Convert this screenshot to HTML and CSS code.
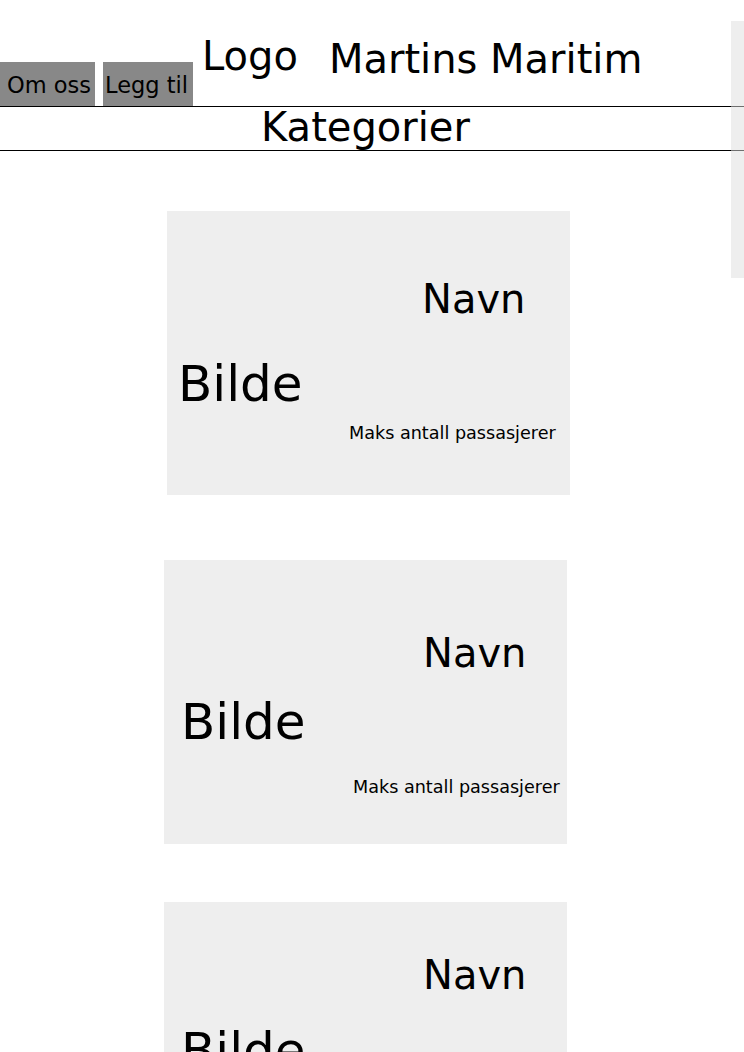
FILE: index.html
```html
<!DOCTYPE html>
<html lang="no">
<head>
<meta charset="utf-8">
<title>Martins Maritim</title>
<link rel="stylesheet" href="styles.css">
</head>
<body>
<header class="site-header">
  <nav class="nav">
    <a class="nav-btn nav-btn--about" href="#">Om oss</a>
    <a class="nav-btn nav-btn--add" href="#">Legg til</a>
  </nav>
  <div class="logo">Logo</div>
  <h1 class="site-title">Martins Maritim</h1>
</header>
<div class="categories">Kategorier</div>
<aside class="side-panel"></aside>
<main class="boat-list">
  <article class="card card--first">
    <div class="card-img">Bilde</div>
    <div class="card-info">
      <h2 class="card-name">Navn</h2>
      <p class="card-capacity">Maks antall passasjerer</p>
    </div>
  </article>
  <article class="card card--second">
    <div class="card-img">Bilde</div>
    <div class="card-info">
      <h2 class="card-name">Navn</h2>
      <p class="card-capacity">Maks antall passasjerer</p>
    </div>
  </article>
  <article class="card card--third">
    <div class="card-img">Bilde</div>
    <div class="card-info">
      <h2 class="card-name">Navn</h2>
      <p class="card-capacity">Maks antall passasjerer</p>
    </div>
  </article>
</main>
</body>
</html>
```

FILE: styles.css
```css
html, body {
  margin: 0;
  padding: 0;
}

body {
  font-family: "DejaVu Sans", Verdana, sans-serif;
  color: #000;
  background: #fff;
  position: relative;
}

/* Header */
.site-header {
  display: flex;
  align-items: flex-start;
  height: 107px;
  box-sizing: border-box;
  border-bottom: 1px solid #000;
}

.nav {
  display: flex;
  gap: 8px;
  margin-top: 62px;
}

.nav-btn {
  display: flex;
  align-items: flex-end;
  justify-content: flex-start;
  height: 44px;
  box-sizing: border-box;
  padding-bottom: 8px;
  background: #888;
  color: #000;
  text-decoration: none;
  font-size: 22.5px;
  line-height: normal;
  white-space: nowrap;
}

.nav-btn--about { width: 95px; padding-left: 7px; }
.nav-btn--add { width: 90px; padding-left: 2px; }

.logo {
  font-size: 40px;
  line-height: normal;
  margin-top: 33px;
  margin-left: 9px;
}

.site-title {
  font-size: 40px;
  font-weight: normal;
  line-height: normal;
  margin: 36px 0 0 31px;
}

/* Categories bar */
.categories {
  height: 44px;
  box-sizing: border-box;
  padding: 0 13px 0 0;
  border-bottom: 1px solid #000;
  text-align: center;
  font-size: 40px;
  line-height: 40px;
}

/* Side panel overlay peeking in at the right edge */
.side-panel {
  position: absolute;
  top: 21px;
  left: 731px;
  width: 40px;
  height: 257px;
  background: rgba(221, 221, 221, 0.5);
}

/* Cards */
.boat-list {
  display: flex;
  flex-direction: column;
  align-items: center;
  padding: 0 13px 40px 0;
}

.card {
  display: flex;
  align-items: flex-start;
  width: 403px;
  height: 284px;
  flex-shrink: 0;
  background: #eee;
}

.card--first {
  margin: 60px 0 0 6px;
  --img-left: 11px;
  --img-top: 148px;
  --info-left: 182px;
  --name-top: 68px;
  --name-indent: 73px;
}

.card--second {
  margin-top: 65px;
  --img-left: 17px;
  --img-top: 137px;
  --info-left: 189px;
  --name-top: 73px;
  --name-indent: 70px;
}

.card--third {
  margin-top: 58px;
  --img-left: 17px;
  --img-top: 124px;
  --info-left: 189px;
  --name-top: 53px;
  --name-indent: 70px;
}

.card-img {
  width: calc(var(--info-left) - var(--img-left));
  flex-shrink: 0;
  margin: var(--img-top) 0 0 var(--img-left);
  font-size: 50px;
  line-height: 1;
}

.card-info {
  display: flex;
  flex-direction: column;
  align-items: flex-start;
  padding-top: var(--name-top);
}

.card-name {
  margin: 0 0 0 var(--name-indent);
  font-size: 40px;
  font-weight: normal;
  line-height: 1;
}

.card-capacity {
  margin: 106px 0 0 0;
  font-size: 17.6px;
  line-height: 1;
  white-space: nowrap;
}
```
